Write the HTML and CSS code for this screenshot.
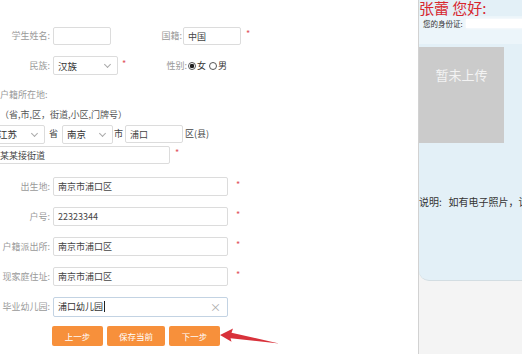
FILE: index.html
```html
<!DOCTYPE html>
<html lang="zh-CN">
<head>
    <meta charset="UTF-8">
    <title>学生信息登记</title>
    <link rel="stylesheet" href="styles.css">
</head>
<body>
    <div class="main">
        <form class="form">
            <div class="row r-first">
                <label class="lbl">学生姓名:</label>
                <input class="txt w-short" type="text" value="">
                <label class="lbl lbl-mid">国籍:</label>
                <input class="txt w-short" type="text" value="中国">
                <span class="star">*</span>
            </div>

            <div class="row r-second">
                <label class="lbl">民族:</label>
                <div class="sel w-nation">
                    <select><option>汉族</option></select>
                </div>
                <span class="star star-tight">*</span>
                <label class="lbl lbl-sex">性别:</label>
                <label class="radio"><input type="radio" name="sex" checked>女</label>
                <label class="radio"><input type="radio" name="sex">男</label>
            </div>

            <div class="region-title">户籍所在地:</div>
            <div class="region-hint">（省,市,区，街道,小区,门牌号）</div>

            <div class="row r-addr">
                <div class="sel w-prov">
                    <select><option>江苏</option></select>
                </div>
                <span class="unit">省</span>
                <div class="sel w-city">
                    <select><option>南京</option></select>
                </div>
                <span class="unit">市</span>
                <input class="txt w-short" type="text" value="浦口">
                <span class="unit unit-last">区(县)</span>
            </div>

            <div class="row r-street">
                <input class="txt w-street" type="text" value="某某接街道">
                <span class="star">*</span>
            </div>

            <div class="row r-field r-field-first">
                <label class="lbl">出生地:</label>
                <input class="txt w-long" type="text" value="南京市浦口区">
                <span class="star star-far">*</span>
            </div>
            <div class="row r-field">
                <label class="lbl">户号:</label>
                <input class="txt w-long" type="text" value="22323344">
                <span class="star star-far">*</span>
            </div>
            <div class="row r-field">
                <label class="lbl">户籍派出所:</label>
                <input class="txt w-long" type="text" value="南京市浦口区">
                <span class="star star-far">*</span>
            </div>
            <div class="row r-field">
                <label class="lbl">现家庭住址:</label>
                <input class="txt w-long" type="text" value="南京市浦口区">
                <span class="star star-far">*</span>
            </div>
            <div class="row r-field">
                <label class="lbl">毕业幼儿园:</label>
                <div class="txt w-long is-focus">
                    <span class="val">浦口幼儿园</span><span class="caret"></span>
                    <span class="clear">×</span>
                </div>
            </div>

            <div class="actions">
                <button type="button" class="btn">上一步</button>
                <button type="button" class="btn btn-wide">保存当前</button>
                <button type="button" class="btn">下一步</button>
            </div>
        </form>

        <!-- annotation arrow pointing at the next button -->
        <svg class="arrow" viewBox="215 325 70 22" width="70" height="22">
            <polygon points="220,335 233,328.5 231.5,332.8 279,343.5 230.5,338.2 231.5,341.8" fill="#d8323b"/>
        </svg>
    </div>

    <aside class="side">
        <div class="welcome">
            <h2 class="hello">张蕾 您好:</h2>
            <div class="idrow"><span>您的身份证:</span><span class="masked"></span></div>
            <div class="photo">暂未上传</div>
            <div class="note">说明:&nbsp;&nbsp;&nbsp;如有电子照片，请上传清晰的正面免冠照片</div>
        </div>
    </aside>
</body>
</html>
```

FILE: styles.css
```css
* {
    box-sizing: border-box;
}

body {
    margin: 0;
    width: 522px;
    height: 354px;
    overflow: hidden;
    display: flex;
    font-family: "Noto Sans CJK SC", "Noto Sans", sans-serif;
    font-size: 9px;
    background: #fff;
}

.main {
    width: 418px;
    flex: none;
    position: relative;
    overflow: hidden;
}

.form {
    padding-top: 27px;
    color: #9a9a9a;
}

.row {
    display: flex;
    align-items: center;
    height: 18px;
    line-height: 12px;
}

.lbl {
    width: 50px;
    margin-right: 3px;
    flex: none;
    display: flex;
    justify-content: flex-end;
    white-space: nowrap;
}

.lbl-mid {
    width: 71px;
    margin-right: 1px;
}

.lbl-sex {
    width: 60px;
    margin-right: 1px;
}

.txt {
    height: 18px;
    border: 1px solid #dcdcdc;
    border-radius: 2px;
    padding: 0 4px;
    font: inherit;
    color: #444;
    background: #fff;
    outline: none;
}

.w-short { width: 58px; }
.w-long { width: 175px; }

.w-street {
    width: 175px;
    margin-left: -5px;
}

.star {
    color: #e0525a;
    margin-left: 5px;
    font-size: 9px;
    width: 5px;
    position: relative;
    top: -2px;
}

.star-tight { margin-left: 4px; }
.star-far { margin-left: 8px; }

/* selects */
.sel {
    position: relative;
    height: 19px;
    flex: none;
}

.sel select {
    appearance: none;
    -webkit-appearance: none;
    width: 100%;
    height: 100%;
    border: 1px solid #dcdcdc;
    border-radius: 2px;
    background: #fff;
    font: inherit;
    font-size: 9.5px;
    color: #333;
    padding: 0 4px;
    outline: none;
}

.sel::after {
    content: "";
    position: absolute;
    right: 8px;
    top: 6px;
    width: 4px;
    height: 4px;
    border-right: 1px solid #aaa;
    border-bottom: 1px solid #aaa;
    transform: rotate(45deg);
    pointer-events: none;
}

.w-nation { width: 65px; }

.w-prov {
    width: 52px;
    margin-left: -7px;
}

.w-city { width: 51px; }

.r-second {
    margin-top: 11px;
    height: 19px;
}

.radio {
    display: flex;
    align-items: center;
    color: #333;
    margin-right: 3px;
}

.radio input {
    appearance: none;
    -webkit-appearance: none;
    width: 8px;
    height: 8px;
    margin: 0 1px 0 0;
    border: 1px solid #555;
    border-radius: 50%;
    background: #fff;
}

.radio input:checked {
    background: radial-gradient(circle, #222 0 2px, #fff 2.4px);
}

.region-title {
    margin-top: 15px;
    line-height: 10px;
}

.region-hint {
    margin-top: 10px;
    line-height: 10px;
    color: #555;
}

.r-addr {
    margin-top: 5px;
}

.unit {
    color: #444;
    margin: 0 4px;
    flex: none;
}

.w-city + .unit {
    margin: 0 2px 0 1px;
}

.unit-last {
    margin-left: 2px;
}

.r-street {
    margin-top: 3px;
}

.r-field {
    margin-top: 11px;
    height: 19px;
}

.r-field .txt {
    height: 19px;
}

.r-field-first {
    margin-top: 13px;
}

.is-focus {
    display: flex;
    align-items: center;
    height: 20px !important;
    border-color: #c3d3e3;
    color: #333;
}

.caret {
    width: 1px;
    height: 11px;
    background: #222;
    margin-left: 1px;
}

.clear {
    margin-left: auto;
    margin-right: 2px;
    color: #aaa;
    font-size: 11px;
}

.actions {
    display: flex;
    gap: 4px;
    margin-top: 10px;
    margin-left: 52px;
}

.btn {
    width: 51px;
    height: 20px;
    border: none;
    border-radius: 2px;
    background: #f7903b;
    color: #fff;
    font: inherit;
    font-size: 8.5px;
    padding: 0;
}

.btn-wide {
    width: 58px;
}

.arrow {
    position: absolute;
    left: 215px;
    top: 325px;
}

/* right side */
.side {
    flex: 1;
    min-width: 0;
    border-left: 1px solid #d2d2d2;
    background: #f4f4f4;
    overflow: hidden;
}

.welcome {
    height: 281px;
    background: #e3f0f7;
    border-bottom: 1px solid #d3dde2;
    border-bottom-left-radius: 10px;
}

.hello {
    margin: 0;
    height: 16px;
    font-size: 15px;
    line-height: 16px;
    font-weight: normal;
    color: #d8262e;
    white-space: nowrap;
}

.idrow {
    height: 28px;
    background: #ecf5fa;
    padding: 3px 0 0 4px;
    font-size: 7.5px;
    line-height: 9px;
    color: #333;
    white-space: nowrap;
    display: flex;
    align-items: flex-start;
}

.masked {
    flex: none;
    width: 62px;
    height: 9px;
    margin-left: 3px;
    background: #fff;
    box-shadow: 0 0 3px #fff;
}

.photo {
    margin-top: 3px;
    width: 85px;
    height: 96px;
    background: #cbcbcb;
    color: #f3f3f3;
    font-size: 13px;
    text-align: center;
    padding-top: 19px;
    line-height: 18px;
}

.note {
    margin-top: 53px;
    font-size: 10px;
    line-height: 12px;
    color: #333;
    white-space: nowrap;
}
```
